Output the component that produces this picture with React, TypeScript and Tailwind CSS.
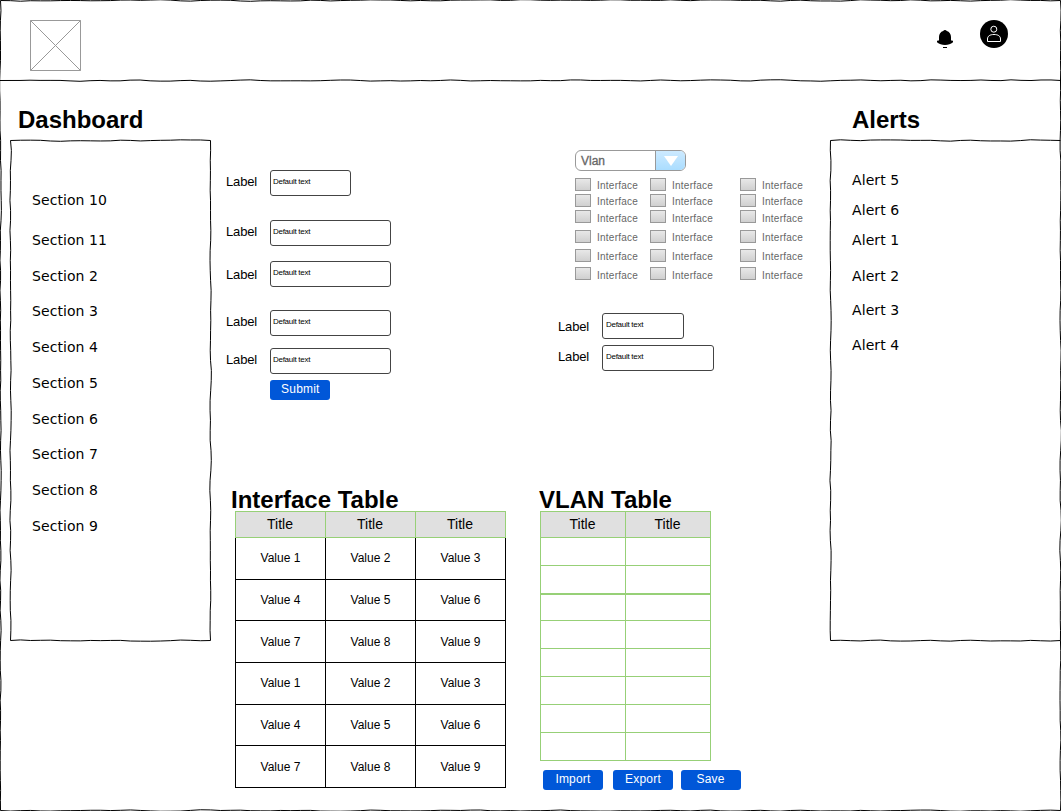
import React from "react";

const ARIAL = "font-['Liberation_Sans',Arial,sans-serif]";
const VERDANA = "font-['DejaVu_Sans',Verdana,sans-serif]";

const noise = (n: number) => {
  const v = Math.sin(n * 12.9898) * 43758.5453;
  return (v - Math.floor(v) - 0.5) * 1.8;
};

/* Hand-drawn line whose points wobble every ten pixels. */
function wobble(x1: number, y1: number, x2: number, y2: number, seed: number) {
  const length = Math.hypot(x2 - x1, y2 - y1);
  const steps = Math.max(1, Math.round(length / 10));
  let d = `M${x1} ${y1}`;
  for (let i = 1; i <= steps; i++) {
    const t = i / steps;
    const off = i === steps ? 0 : (noise(seed + i) + noise(seed + i + 1)) / 2;
    const x = x1 + (x2 - x1) * t + (x1 === x2 ? off : 0);
    const y = y1 + (y2 - y1) * t + (y1 === y2 ? off : 0);
    d += `L${x.toFixed(2)} ${y.toFixed(2)}`;
  }
  return d;
}

function SketchFrame({ w, h, seed, open = false }: { w: number; h: number; seed: number; open?: boolean }) {
  const r = w - 0.5;
  const b = h - 0.5;
  return (
    <svg className="pointer-events-none absolute top-0 left-0 overflow-visible" width={w} height={h} fill="none" stroke="#000" strokeWidth="1">
      <path d={wobble(0.5, 0.5, r, 0.5, seed)} />
      {!open && <path d={wobble(r, 0.5, r, b, seed + 200)} />}
      <path d={wobble(0.5, b, r, b, seed + 400)} />
      <path d={wobble(0.5, 0.5, 0.5, b, seed + 600)} />
    </svg>
  );
}

function Heading({ children }: { children: React.ReactNode }) {
  return <h2 className={`${ARIAL} text-[24px] leading-[28px] font-bold whitespace-nowrap`}>{children}</h2>;
}

function Field({ width, className = "", labelClass = "leading-6", pad = "pl-[2px]" }: { width: string; className?: string; labelClass?: string; pad?: string }) {
  return (
    <div className={`flex h-[26px] items-start ${className}`}>
      <label className={`w-11 shrink-0 text-[13px] tracking-[-0.15px] ${labelClass}`}>Label</label>
      <div className={`h-[26px] rounded-[3px] border border-[#444] text-[8px] leading-[21px] tracking-[-0.28px] whitespace-nowrap ${pad} ${width}`}>
        Default text
      </div>
    </div>
  );
}

function Button({ children, className = "" }: { children: React.ReactNode; className?: string }) {
  return (
    <button className={`h-5 w-[60px] rounded-[3px] bg-[#0057d8] pb-px text-center text-[12px] leading-[17px] tracking-[0.2px] text-white ${className}`}>
      {children}
    </button>
  );
}

const sections = [
  ["Section 10", "h-10"],
  ["Section 11", "h-9"],
  ["Section 2", "h-[35px]"],
  ["Section 3", "h-9"],
  ["Section 4", "h-9"],
  ["Section 5", "h-9"],
  ["Section 6", "h-[35px]"],
  ["Section 7", "h-9"],
  ["Section 8", "h-9"],
  ["Section 9", "h-9"],
];

const alerts = [
  ["Alert 5", "h-[30px]"],
  ["Alert 6", "h-[30px]"],
  ["Alert 1", "h-9"],
  ["Alert 2", "h-[34px]"],
  ["Alert 3", "h-[35px]"],
  ["Alert 4", "h-[35px]"],
];

const checkRows = [
  { h: "h-4", text: "leading-[15px]" },
  { h: "h-4", text: "leading-[15px]" },
  { h: "h-5", text: "leading-[17px]" },
  { h: "h-[19px]", text: "leading-[15px]" },
  { h: "h-[18px]", text: "leading-[15px]" },
  { h: "h-[18px]", text: "leading-[17px]" },
];

function Check({ text }: { text: string }) {
  return (
    <div className="flex items-start">
      <span className="h-[13px] w-4 border border-[#999] bg-linear-to-b from-[#e8e8e8] to-[#d0d0d0]" />
      <span className={`ml-1.5 text-[10px] tracking-[0.25px] text-[#666] ${text}`}>Interface</span>
    </div>
  );
}

const valueRows = [
  { h: "h-[42px] leading-[40px]", from: 1 },
  { h: "h-[41px] leading-[40px]", from: 4 },
  { h: "h-[42px] leading-[42px]", from: 7 },
  { h: "h-[42px] leading-[40px]", from: 1 },
  { h: "h-[41px] leading-[40px]", from: 4 },
  { h: "h-[42px] leading-[42px]", from: 7 },
];

const vlanRows = ["h-7 border-b", "h-[29px] border-b-2", "h-[26px] border-b", "h-7 border-b", "h-7 border-b", "h-7 border-b", "h-7 border-b", "h-7 border-b"];

function TitleCell({ w, first }: { w: string; first: boolean }) {
  return (
    <div className={`${w} h-[27px] border-y border-r border-[#97d077] bg-[#e0e0e0] pr-px text-center text-[14px] leading-[25px] ${first ? "border-l" : ""}`}>
      Title
    </div>
  );
}

export default function App() {
  return (
    <div className={`relative flex h-[811px] w-[1061px] flex-col overflow-hidden bg-white text-black ${ARIAL}`}>
      <SketchFrame w={1061} h={811} seed={11} />
      <header className="relative flex h-[81px] shrink-0 items-start">
        <svg className="absolute bottom-0 left-0 overflow-visible" width="1061" height="1" fill="none" stroke="#000">
          <path d={wobble(0, 0.5, 1061, 0.5, 900)} />
        </svg>
        <svg className="mt-5 ml-[30px]" width="51" height="51" fill="none" stroke="#999">
          <path d="M.5.5h50v50H.5zL50.5 50.5M50.5.5L.5 50.5" />
        </svg>
        <svg className="mt-[30px] ml-[856px]" width="16" height="18">
          <path d="M8 0C8.8 0 9.3.4 9.8 1C12.4 1.7 14 4 14 7V10.4H15.2L16 11V12.2C13.5 14 11.5 14.9 8 14.9S2.5 14 0 12.2V11L.8 10.4H2V7C2 4 3.6 1.7 6.2 1C6.7.4 7.2 0 8 0Z" />
          <path d="M6 17h4v1H6z" />
        </svg>
        <svg className="mt-5 ml-[27px]" width="28" height="28" fill="none" stroke="#fff" strokeWidth="1">
          <circle cx="14" cy="14" r="14" fill="#000" stroke="none" />
          <circle cx="13.8" cy="9.2" r="3" />
          <path d="M7.5 21.5V19C7.5 16 10 14.5 14 14.5S20.5 16 20.5 19V21.5Z" />
        </svg>
      </header>

      <div className="flex">
        <aside className="w-[211px] shrink-0 pt-[25px] pl-[10px]">
          <div className="h-[34px] pl-2"><Heading>Dashboard</Heading></div>
          <div className="relative h-[501px] w-[201px] pt-[51px] pl-[22px]">
            <SketchFrame w={201} h={501} seed={31} />
            <ul className={`${VERDANA} text-[14px] leading-[18px] tracking-[0.08px]`}>
              {sections.map(([name, h]) => (
                <li key={name} className={h}>{name}</li>
              ))}
            </ul>
          </div>
        </aside>

        <main className="flex w-[619px] shrink-0 flex-col">
          <div className="flex h-[405px]">
            <section className="w-[332px] pt-[89px] pl-[15px]">
              <Field width="w-[81px]" />
              <Field width="w-[121px]" className="mt-6" />
              <Field width="w-[121px]" className="mt-[15px]" labelClass="leading-[28px]" />
              <Field width="w-[121px]" className="mt-[23px]" />
              <Field width="w-[121px]" className="mt-3" />
              <Button className="mt-1.5 ml-[44.4px] block">Submit</Button>
            </section>

            <section className="pt-[69px]">
              <div className="pl-8">
                <div className="flex h-[21px] w-[111px] overflow-hidden rounded-[6px] border border-[#999]">
                  <span className="w-[79px] pl-[5px] text-[12px] leading-[21px] text-[#666] [-webkit-text-stroke:0.3px_#666]">Vlan</span>
                  <span className="flex flex-1 items-center justify-center border-l border-[#999] bg-linear-to-b from-[#cdeaff] to-[#aaddff]">
                    <svg width="14" height="10" fill="#fff"><path d="M0 0h14L7 10z" /></svg>
                  </span>
                </div>
                <div className="mt-[7px]">
                  {checkRows.map(({ h, text }, i) => (
                    <div key={i} className={`grid grid-cols-[75px_90px_65px] ${h}`}>
                      <Check text={text} /><Check text={text} /><Check text={text} />
                    </div>
                  ))}
                </div>
              </div>
              <div className="mt-7 pl-[15px]">
                <Field width="w-[82px]" labelClass="leading-[28px]" pad="pl-[3px]" />
                <Field width="w-[112px]" className="mt-1.5" pad="pl-[3px]" />
              </div>
            </section>
          </div>

          <div className="flex">
            <section className="w-[328px] pl-5">
              <div className="h-[25px]"><Heading>Interface Table</Heading></div>
              <div className="w-[275px] pl-1">
                <div className="flex">
                  <TitleCell w="w-[91px]" first />
                  <TitleCell w="w-[90px]" first={false} />
                  <TitleCell w="w-[90px]" first={false} />
                </div>
                {valueRows.map(({ h, from }, i) => (
                  <div key={i} className={`grid w-[271px] grid-cols-[90px_90px_90px] border-b border-l border-black text-center text-[12px] ${h}`}>
                    {[0, 1, 2].map((c) => (
                      <div key={c} className="border-r border-black">Value {from + c}</div>
                    ))}
                  </div>
                ))}
              </div>
            </section>

            <section>
              <div className="h-[25px]"><Heading>VLAN Table</Heading></div>
              <div className="pl-px">
                <div className="flex">
                  <TitleCell w="w-[86px]" first />
                  <TitleCell w="w-[85px]" first={false} />
                </div>
                {vlanRows.map((row, i) => (
                  <div key={i} className={`grid w-[171px] grid-cols-[85px_85px] border-l border-[#97d077] ${row}`}>
                    <div className="border-r border-[#97d077]" />
                    <div className="border-r border-[#97d077]" />
                  </div>
                ))}
              </div>
              <div className="mt-[9px] flex pl-1">
                <Button>Import</Button>
                <Button className="ml-2.5">Export</Button>
                <Button className="ml-[7.5px]">Save</Button>
              </div>
            </section>
          </div>
        </main>

        <aside className="w-[231px] shrink-0 pt-[25px]">
          <div className="h-[34px] pl-[22px]"><Heading>Alerts</Heading></div>
          <div className="relative h-[501px] pt-[31px] pl-[22px]">
            <SketchFrame w={231} h={501} seed={77} open />
            <ul className={`${VERDANA} text-[14px] leading-[18px] tracking-[0.08px]`}>
              {alerts.map(([name, h]) => (
                <li key={name} className={h}>{name}</li>
              ))}
            </ul>
          </div>
        </aside>
      </div>
    </div>
  );
}
